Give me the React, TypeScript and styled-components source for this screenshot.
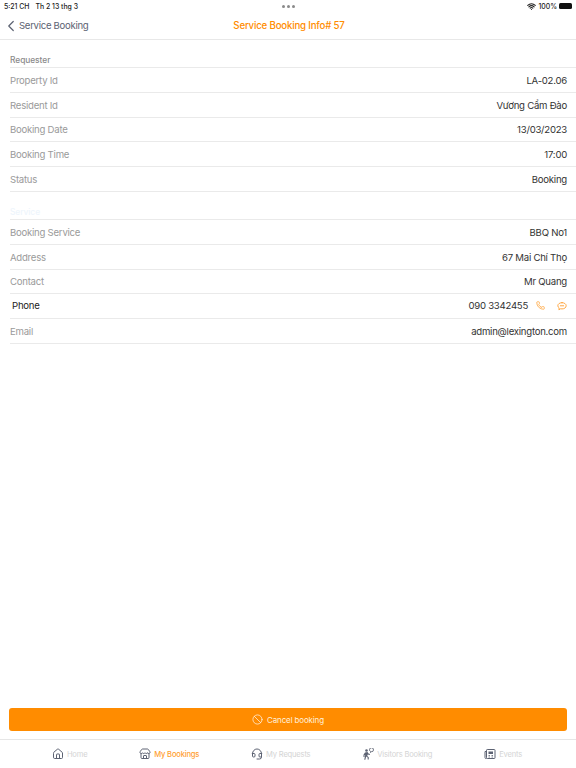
import styled, { createGlobalStyle } from 'styled-components';
import { ChevronLeft, Phone, Ban, House, Store, Headset, Wifi } from 'lucide-react';

const GlobalStyle = createGlobalStyle`
  html, body {
    margin: 0;
    padding: 0;
    background: #fff;
  }
  * {
    box-sizing: border-box;
  }
`;

const Page = styled.div`
  width: 576px;
  height: 768px;
  display: flex;
  flex-direction: column;
  font-family: Inter, 'Liberation Sans', sans-serif;
  overflow: hidden;
`;

const StatusBar = styled.div`
  height: 12px;
  padding: 0 4px;
  display: grid;
  grid-template-columns: 1fr auto 1fr;
  align-items: center;
  font-size: 6.9px;
  font-weight: 500;
  color: #222;
`;

const StatusLeft = styled.div`
  display: flex;
  gap: 6px;
`;

const Dots = styled.div`
  display: flex;
  gap: 2px;
`;

const Dot = styled.span`
  width: 3px;
  height: 3px;
  border-radius: 50%;
  background: #8a8a8a;
`;

const StatusRight = styled.div`
  display: flex;
  justify-content: flex-end;
  align-items: center;
  gap: 2px;
`;

const Battery = styled.div`
  width: 13px;
  height: 6px;
  border-radius: 1.5px;
  background: #111;
`;

const Header = styled.header`
  height: 28px;
  display: grid;
  grid-template-columns: 1fr auto 1fr;
  align-items: center;
  border-bottom: 1px solid #e8e8e8;
  padding-left: 2px;
`;

const BackLink = styled.div`
  display: flex;
  align-items: center;
  font-size: 9.6px;
  letter-spacing: -0.3px;
  color: #5c6272;
  svg {
    margin-right: -1px;
  }
`;

const Title = styled.div`
  font-size: 9.7px;
  font-weight: 500;
  letter-spacing: -0.2px;
  color: #ff8c00;
`;

const Content = styled.main`
  flex: 1;
  padding: 14px 0 0 10px;
`;

const SectionTitle = styled.div<{ $faint?: boolean }>`
  height: 14px;
  font-size: 8.4px;
  font-weight: 500;
  letter-spacing: -0.05px;
  line-height: 13px;
  color: ${(p) => (p.$faint ? '#eef5fc' : '#8a8a8a')};
  border-bottom: 1px solid #eaeaea;
`;

const Section = styled.section`
  margin-bottom: 14px;
`;

const Row = styled.div<{ $raised?: boolean }>`
  height: 24.8px;
  display: flex;
  align-items: center;
  justify-content: space-between;
  padding-right: 9px;
  padding-top: ${(p) => (p.$raised ? '0' : '1px')};
  padding-bottom: ${(p) => (p.$raised ? '1px' : '0')};
  border-bottom: 1px solid #eaeaea;
  font-size: 9.6px;
  letter-spacing: -0.25px;
`;

const Label = styled.span<{ $dark?: boolean }>`
  color: ${(p) => (p.$dark ? '#222' : '#9a9a9a')};
  padding-left: ${(p) => (p.$dark ? '2px' : '0')};
`;

const Value = styled.span`
  color: #333;
`;

const PhoneActions = styled.div`
  display: flex;
  align-items: center;
  color: #333;
  gap: 8px;
  svg {
    color: #ffa033;
  }
`;

const ChatSlot = styled.span`
  display: flex;
  margin-left: 4px;
`;

const CancelWrap = styled.div`
  padding: 0 9px 8px;
`;

const CancelButton = styled.button`
  width: 100%;
  height: 23px;
  display: flex;
  align-items: center;
  justify-content: center;
  gap: 4px;
  border: none;
  border-radius: 3px;
  background: #ff8c00;
  color: #fff0dd;
  font-family: inherit;
  font-size: 8px;
  letter-spacing: -0.15px;
  padding: 0;
`;

const TabBar = styled.nav`
  height: 29px;
  border-top: 1px solid #e6e6e6;
  display: flex;
  justify-content: space-evenly;
  align-items: center;
  padding-right: 2px;
`;

const Tab = styled.div<{ $active?: boolean }>`
  display: flex;
  align-items: center;
  gap: 3px;
  font-size: 7.6px;
  letter-spacing: -0.2px;
  font-weight: ${(p) => (p.$active ? 500 : 400)};
  color: ${(p) => (p.$active ? '#ffa033' : '#d4d4d4')};
  svg {
    color: #5c6272;
  }
`;

const ChatIcon = () => (
  <svg width="10" height="10" viewBox="0 0 24 24" fill="none" stroke="currentColor" strokeWidth="2.2" strokeLinecap="round" strokeLinejoin="round">
    <path d="M12 4c5.5 0 10 3 10 7.5S17.5 19 12 19c-1.2 0-2.3-.1-3.3-.4L4.5 21l.7-4.4C3 15.200 2 13.400 2 11.500 2 7 6.500 4 12 4z" />
    <path d="M8 11.500h8" />
  </svg>
);

const VisitorIcon = () => (
  <svg width="12" height="12" viewBox="0 0 24 24" fill="currentColor" stroke="none">
    <circle cx="9" cy="5" r="2.600" />
    <path d="M6 9l5-1 2 3 3 1-.5 2-4-1.200-1 3 3 2.500V23h-2.200v-4l-3-2-1.600 6.500H4.500L6.500 13.500 5 14.500V18H3v-4.500z" />
    <path d="M15 3.500a4 4 0 1 1 3.500 4l-1.500 1.500v-2a4 4 0 0 1-2-3.500z" fill="none" stroke="currentColor" strokeWidth="1.800" />
  </svg>
);

const EventsIcon = () => (
  <svg width="12" height="12" viewBox="0 0 24 24" fill="none" stroke="currentColor" strokeWidth="2">
    <rect x="5" y="3" width="17" height="18" rx="1.500" />
    <path d="M5 7H2v12a2 2 0 0 0 3 2" />
    <rect x="9" y="7" width="9" height="5" fill="currentColor" stroke="none" />
    <path d="M9 15h3M9 18h3M15 15h3M15 18h3" strokeWidth="1.600" />
  </svg>
);

const requester = [
  ['Property Id', 'LA-02.06'],
  ['Resident Id', 'Vương Cẩm Đào'],
  ['Booking Date', '13/03/2023'],
  ['Booking Time', '17:00'],
  ['Status', 'Booking'],
];

const service = [
  ['Booking Service', 'BBQ No1'],
  ['Address', '67 Mai Chí Thọ'],
  ['Contact', 'Mr Quang'],
];

export default function App() {
  return (
    <Page>
      <GlobalStyle />
      <StatusBar>
        <StatusLeft>
          <span>5:21 CH</span>
          <span>Th 2 13 thg 3</span>
        </StatusLeft>
        <Dots>
          <Dot />
          <Dot />
          <Dot />
        </Dots>
        <StatusRight>
          <Wifi size={9} strokeWidth={3} />
          <span>100%</span>
          <Battery />
        </StatusRight>
      </StatusBar>
      <Header>
        <BackLink>
          <ChevronLeft size={18} strokeWidth={1.6} />
          Service Booking
        </BackLink>
        <Title>Service Booking Info# 57</Title>
      </Header>
      <Content>
        <Section>
          <SectionTitle>Requester</SectionTitle>
          {requester.map(([label, value]) => (
            <Row key={label}>
              <Label>{label}</Label>
              <Value>{value}</Value>
            </Row>
          ))}
        </Section>
        <Section>
          <SectionTitle $faint>Service</SectionTitle>
          {service.map(([label, value]) => (
            <Row key={label}>
              <Label>{label}</Label>
              <Value>{value}</Value>
            </Row>
          ))}
          <Row $raised>
            <Label $dark>Phone</Label>
            <PhoneActions>
              <span>090 3342455</span>
              <Phone size={9} />
              <ChatSlot>
                <ChatIcon />
              </ChatSlot>
            </PhoneActions>
          </Row>
          <Row>
            <Label>Email</Label>
            <Value>admin@lexington.com</Value>
          </Row>
        </Section>
      </Content>
      <CancelWrap>
        <CancelButton>
          <Ban size={11} strokeWidth={1.7} />
          Cancel booking
        </CancelButton>
      </CancelWrap>
      <TabBar>
        <Tab>
          <House size={12} />
          Home
        </Tab>
        <Tab $active>
          <Store size={12} />
          My Bookings
        </Tab>
        <Tab>
          <Headset size={12} />
          My Requests
        </Tab>
        <Tab>
          <VisitorIcon />
          Visitors Booking
        </Tab>
        <Tab>
          <EventsIcon />
          Events
        </Tab>
      </TabBar>
    </Page>
  );
}
